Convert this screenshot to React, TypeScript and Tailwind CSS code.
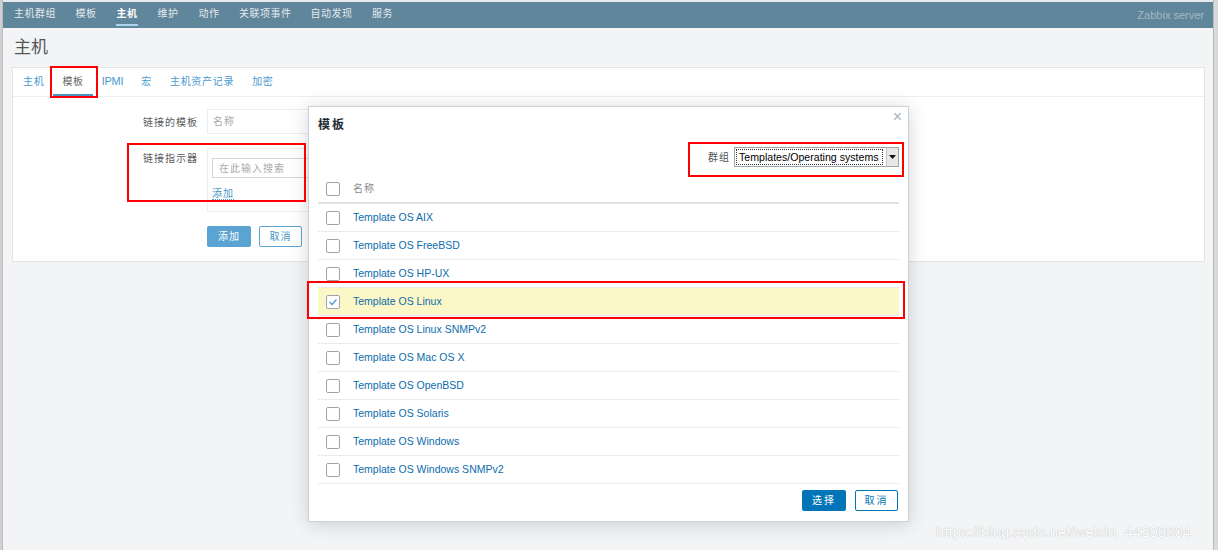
import React from 'react';

const navItems = ['主机群组', '模板', '主机', '维护', '动作', '关联项事件', '自动发现', '服务'];
const tabs = ['主机', '模板', 'IPMI', '宏', '主机资产记录', '加密'];
const templates = [
  'Template OS AIX',
  'Template OS FreeBSD',
  'Template OS HP-UX',
  'Template OS Linux',
  'Template OS Linux SNMPv2',
  'Template OS Mac OS X',
  'Template OS OpenBSD',
  'Template OS Solaris',
  'Template OS Windows',
  'Template OS Windows SNMPv2',
];

function Checkbox({ checked }: { checked?: boolean }) {
  return (
    <div className="w-[14px] h-[14px] border border-[#9aa6ae] rounded-[2px] bg-white flex items-center justify-center shrink-0">
      {checked && (
        <svg width="10" height="10" viewBox="0 0 10 10">
          <polyline points="1.5,5 4,7.5 8.5,2.5" fill="none" stroke="#5a9bd0" strokeWidth="1.3" />
        </svg>
      )}
    </div>
  );
}

export default function App() {
  return (
    <div className="w-[1218px] h-[550px] relative overflow-hidden bg-[#f2f4f6] flex font-['Liberation_Sans','Noto_Sans_CJK_SC',sans-serif]">
      {/* left strip */}
      <div className="w-[3px] h-full bg-[#d0d0d0] border-r border-[#bdbdbd]" />

      {/* main */}
      <div className="flex-1 flex flex-col min-w-0">
        <div className="h-[2px] bg-[#e6eaed]" />
        {/* nav */}
        <div className="h-[26px] bg-[#5f869b] flex items-stretch justify-between pl-[11px] pr-[9px]">
          <div className="flex gap-[19px]">
            {navItems.map((n) => {
              const active = n === '主机';
              return (
                <div key={n} className="flex flex-col items-center h-full">
                  <span
                    className={`mt-[6px] text-[10px] leading-[12px] tracking-[0.5px] ${active ? 'text-white font-bold' : 'text-[#e3e9ed]'}`}
                  >
                    {n}
                  </span>
                  <div className={`mt-auto mb-[2px] h-[2px] w-[22px] ${active ? 'bg-[#a9d3ee]' : 'bg-transparent'}`} />
                </div>
              );
            })}
          </div>
          <div className="flex items-center text-[11px] text-[#a7b8c3]">Zabbix server</div>
        </div>

        {/* title */}
        <div className="h-[39px] flex items-center pl-[11px] text-[17px] leading-none text-[#555555]">主机</div>

        {/* card */}
        <div className="ml-[9px] mr-[8px] bg-white border border-[#e1e5e8]">
          <div className="h-[29px] flex items-stretch border-b border-[#eceff1] pl-[1px]">
            {tabs.map((t) => {
              const active = t === '模板';
              return (
                <div
                  key={t}
                  className={`px-[9px] flex items-center ${active ? 'border-b-2 border-[#4796c4] text-[#666666]' : 'border-b-2 border-transparent text-[#4a9ad0]'} ${t === 'IPMI' ? 'text-[11px] tracking-[-0.3px]' : 'text-[10px] tracking-[0.7px]'}`}
                >
                  {t}
                </div>
              );
            })}
          </div>

          <div className="grid grid-cols-[185px_auto] gap-x-[9px] gap-y-[14px] pt-[12px] pb-[14px] justify-start">
            <div className="text-right text-[10px] tracking-[1px] text-[#5a5a5a] pt-[6px]">链接的模板</div>
            <div className="w-[460px] h-[25px] border border-[#ebeef0] flex items-center pl-[5px] text-[10px] tracking-[1px] text-[#a9a9a9]">名称</div>

            <div className="text-right text-[10px] tracking-[1px] text-[#5a5a5a] pt-[3px]">链接指示器</div>
            <div className="w-[460px] h-[64px] border border-[#ebeef0] px-[4px] pt-[9px] flex flex-col">
              <div className="w-[300px] h-[20px] border border-[#cfd6da] flex items-center pl-[6px] text-[10px] tracking-[1px] text-[#aaaaaa]">在此输入搜索</div>
              <div className="mt-[9px] text-[10px] tracking-[1px] text-[#4796c4] leading-[14px]">
                <span className="border-b border-dotted border-[#4796c4]">添加</span>
              </div>
            </div>

            <div />
            <div className="flex gap-[8px]">
              <div className="w-[44px] h-[21px] bg-[#5ba3d3] rounded-[2px] text-white text-[10px] tracking-[1px] flex items-center justify-center">添加</div>
              <div className="w-[43px] h-[21px] border border-[#5ba3d3] rounded-[2px] bg-white text-[#4796c4] text-[10px] tracking-[1px] flex items-center justify-center">取消</div>
            </div>
          </div>
        </div>
      </div>

      {/* right strip */}
      <div className="w-[5px] h-full bg-[#dadada] border-l border-[#b9b9b9]" />

      {/* modal */}
      <div className="absolute left-[308px] top-[106px] w-[601px] h-[416px] bg-white border border-[#c8d0d6] shadow-[0_2px_18px_rgba(0,0,0,0.16)] flex flex-col px-[9px]">
        <div className="h-[36px] flex items-center text-[12px] font-bold tracking-[2px] text-[#1f2c33]">模板</div>
        <div className="absolute top-[2px] right-[6px] text-[16px] leading-none text-[#a9b2b9]">×</div>

        <div className="mt-[4px] h-[20px] flex justify-end items-center gap-[4px]">
          <span className="text-[10px] tracking-[1px] text-[#555555]">群组</span>
          <div className="w-[165px] h-[20px] border border-[#9ba5ad] bg-white flex items-stretch">
            <div className="flex-1 flex items-center pl-[1px] py-[1px] pr-[3px]">
              <div className="h-full w-full border border-dotted border-[#333333] flex items-center pl-[2px] text-[10.6px] text-black leading-none">
                Templates/Operating systems
              </div>
            </div>
            <div className="w-[12px] bg-[#e8e8e8] border-l border-[#c9c9c9] flex items-center justify-center">
              <svg width="7" height="4" viewBox="0 0 7 4"><polygon points="0,0 7,0 3.5,4" fill="#111111" /></svg>
            </div>
          </div>
        </div>

        <div className="mt-[8px] h-[29px] border-b-2 border-[#dfe3e6] flex items-center pl-[8px] gap-[13px]">
          <Checkbox />
          <span className="text-[10px] tracking-[1px] text-[#8a8a8a]">名称</span>
        </div>

        {templates.map((t) => {
          const sel = t === 'Template OS Linux';
          return (
            <div
              key={t}
              className={`h-[28px] border-b border-[#e8ebed] flex items-center pl-[8px] gap-[13px] ${sel ? 'bg-[#fcf7c6]' : ''}`}
            >
              <Checkbox checked={sel} />
              <span className="text-[10.5px] text-[#0b6cac]">{t}</span>
            </div>
          );
        })}

        <div className="mt-[6px] flex justify-end gap-[9px] pr-[1px]">
          <div className="w-[44px] h-[21px] bg-[#0275b8] rounded-[2px] text-white text-[10px] tracking-[2px] flex items-center justify-center">选择</div>
          <div className="w-[43px] h-[21px] border border-[#0275b8] rounded-[2px] bg-white text-[#0275b8] text-[10px] tracking-[2px] flex items-center justify-center">取消</div>
        </div>
      </div>

      {/* red annotation boxes */}
      <div className="absolute left-[50px] top-[66px] w-[48px] h-[32px] border-2 border-[#ff0000]" />
      <div className="absolute left-[127px] top-[143px] w-[179px] h-[59px] border-2 border-[#ff0000]" />
      <div className="absolute left-[688px] top-[142px] w-[216px] h-[35px] border-2 border-[#ff0000]" />
      <div className="absolute left-[307px] top-[281px] w-[598px] h-[38px] border-2 border-[#ff0000]" />

      {/* watermark */}
      <div className="absolute left-[936px] top-[521px] text-[15px] text-white [text-shadow:0_0_1px_rgba(0,0,0,0.35)]">https://blog.csdn.net/weixin_44209804</div>
    </div>
  );
}
